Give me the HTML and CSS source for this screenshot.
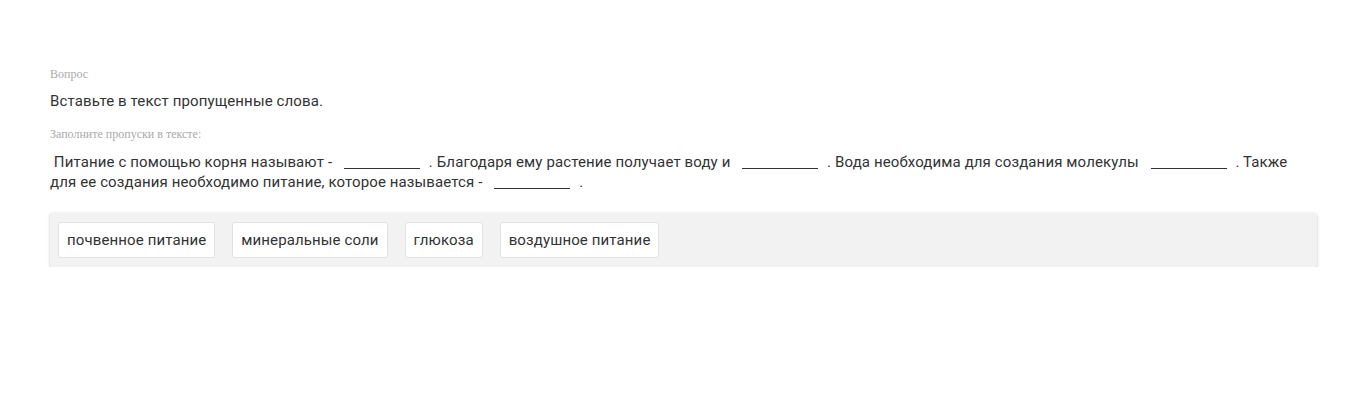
FILE: index.html
```html
<!DOCTYPE html>
<html lang="ru">
<head>
    <meta charset="UTF-8">
    <meta name="viewport" content="width=device-width, initial-scale=1.0">
    <title>Вопрос</title>
    <link rel="stylesheet" href="styles.css">
</head>
<body>
    <div class="question">
        <div class="caption">Вопрос</div>
        <div class="question-text">Вставьте в текст пропущенные слова.</div>

        <div class="caption caption-fill">Заполните пропуски в тексте:</div>
        <div class="fill-text">
            &nbsp;Питание с помощью корня называют - <span class="blank"></span> . Благодаря ему растение получает воду и <span class="blank"></span> . Вода необходима для создания молекулы <span class="blank"></span> . Также для ее создания необходимо питание, которое называется - <span class="blank"></span> .
        </div>

        <div class="word-bank">
            <div class="word">почвенное питание</div>
            <div class="word">минеральные соли</div>
            <div class="word">глюкоза</div>
            <div class="word">воздушное питание</div>
        </div>
    </div>
</body>
</html>
```

FILE: styles.css
```css
body {
    margin: 0;
    font-family: Roboto, "Liberation Sans", sans-serif;
    font-size: 15px;
    letter-spacing: 0.12px;
    color: #333;
    background: #fff;
}

.question {
    margin: 0 29px 0 50px;
    padding-top: 67px;
}

.caption {
    font-family: "Liberation Serif", serif;
    font-size: 12px;
    letter-spacing: 0;
    color: #aaa;
    line-height: 14px;
}

.question-text {
    margin-top: 10px;
    line-height: 20px;
}

.caption-fill {
    margin-top: 16px;
}

.fill-text {
    margin-top: 11px;
    padding-right: 26px;
    line-height: 20px;
}

.blank {
    display: inline-block;
    width: 76px;
    margin: 0 5px 0 8px;
    border-bottom: 1px solid #333;
    vertical-align: -2px;
}

.word-bank {
    display: flex;
    gap: 17px;
    margin-top: 21px;
    padding: 9px 8px;
    background: #f2f2f2;
    border-radius: 2px;
    box-shadow: 0 1px 3px rgba(0, 0, 0, 0.25);
}

.word {
    height: 34px;
    line-height: 34px;
    padding: 0 8px;
    background: #fff;
    border: 1px solid #e2e2e2;
    border-radius: 3px;
}
```
